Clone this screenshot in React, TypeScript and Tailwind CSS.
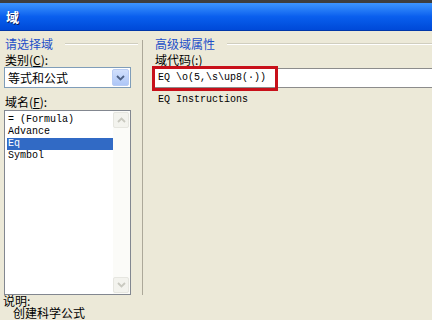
import React from "react"

const cjk = { fontFamily: '"Noto Sans CJK SC", "Noto Sans", sans-serif' }
const mono = { fontFamily: '"Liberation Mono", "DejaVu Sans Mono", monospace' }

function Chevron({ up, color }: { up?: boolean; color: string }) {
  return (
    <svg width="9" height="6" viewBox="0 0 9 6">
      <path d={up ? "M1 5 L4.5 1.5 L8 5" : "M1 1 L4.5 4.5 L8 1"} fill="none" stroke={color} strokeWidth="1.8" />
    </svg>
  )
}

function GroupHead({ label }: { label: string }) {
  return (
    <div className="flex items-center h-[14px]">
      <span className="text-[12px] leading-[14px] text-[#1C4FC8] whitespace-nowrap">{label}</span>
      <div className="ml-[12px] flex-1 h-[2px] border-t border-[#D0CEBF] border-b border-b-white" />
    </div>
  )
}

export default function App() {
  const items = ["= (Formula)", "Advance", "Eq", "Symbol"]
  return (
    <div className="w-[432px] h-[320px] overflow-hidden bg-[#ECE9D8] text-black" style={cjk}>
      {/* title bar */}
      <div className="h-[3px] bg-[#3E3E3E]" />
      <div className="h-[28px] flex items-center pl-[6px] bg-gradient-to-b from-[#3D95FF] via-[#0A5FEE] to-[#0049D8] border-b border-[#0036A8]">
        <span className="text-[13px] font-bold text-white [text-shadow:1px_1px_0_#0A1A5C]">域</span>
      </div>

      <div className="flex h-[264px]">
        {/* left pane */}
        <div className="w-[138px] pl-[4px] pr-0">
          <div className="mt-[6px] pl-[1px]">
            <GroupHead label="请选择域" />
          </div>
          <div className="mt-[2px] pl-[1px] text-[12px] leading-[14px]">
            类别(<span className="underline">C</span>):
          </div>
          <div className="mt-0 h-[21px] w-[127px] border border-[#7F9DB9] bg-white flex items-center">
            <span className="flex-1 pl-[3px] text-[12px] leading-[14px]">等式和公式</span>
            <div className="w-[17px] h-[17px] mr-[1px] rounded-[2px] bg-gradient-to-b from-[#D2E0FC] to-[#ADC6F7] border border-[#B8CCF4] flex items-center justify-center">
              <Chevron color="#4D6185" />
            </div>
          </div>
          <div className="mt-[7px] pl-[1px] text-[12px] leading-[14px]">
            域名(<span className="underline">F</span>):
          </div>
          <div className="mt-[1px] h-[185px] w-[127px] border border-[#828790] bg-white flex">
            <div className="flex-1 pt-[3px] pl-[2px] text-[10px] leading-[12px]" style={mono}>
              {items.map((t) => (
                <div
                  key={t}
                  className={
                    "h-[12px] pl-[1px] whitespace-pre " + (t === "Eq" ? "bg-[#316AC5] text-white" : "")
                  }
                >
                  {t}
                </div>
              ))}
            </div>
            <div className="w-[17px] bg-[#FBFBF8] flex flex-col justify-between py-[1px] pr-[1px]">
              <div className="h-[16px] border border-[#E6E6E0] rounded-[2px] bg-[#F3F3EE] flex items-center justify-center">
                <Chevron up color="#C9C9C0" />
              </div>
              <div className="h-[16px] border border-[#E6E6E0] rounded-[2px] bg-[#F3F3EE] flex items-center justify-center">
                <Chevron color="#C9C9C0" />
              </div>
            </div>
          </div>
        </div>

        {/* separator */}
        <div className="mt-[9px] w-[5px] flex">
          <div className="ml-[4px] w-px bg-[#ACA899]" />
        </div>

        {/* right pane */}
        <div className="flex-1 pl-[12px]">
          <div className="mt-[6px]">
            <GroupHead label="高级域属性" />
          </div>
          <div className="mt-[2px] text-[12px] leading-[14px]">域代码(:)</div>
          <div className="relative mt-[1px] h-[20px] bg-white border-y border-[#8C8C8C] flex items-center">
            <span className="pl-[3px] text-[10px] leading-[12px] whitespace-pre" style={mono}>
              EQ \o(5,\s\up8(·))
            </span>
            <div className="absolute left-[-3px] top-[-3px] w-[126px] h-[25px] border-[3px] border-[#C8101A]" />
          </div>
          <div className="mt-[6px] pl-[3px] text-[10px] leading-[12px]" style={mono}>
            EQ Instructions
          </div>
        </div>
      </div>

      <div className="pl-[3px] text-[12px] leading-[12px]">
        说明:
        <br />
        <span className="pl-[10px]">创建科学公式</span>
      </div>
    </div>
  )
}
